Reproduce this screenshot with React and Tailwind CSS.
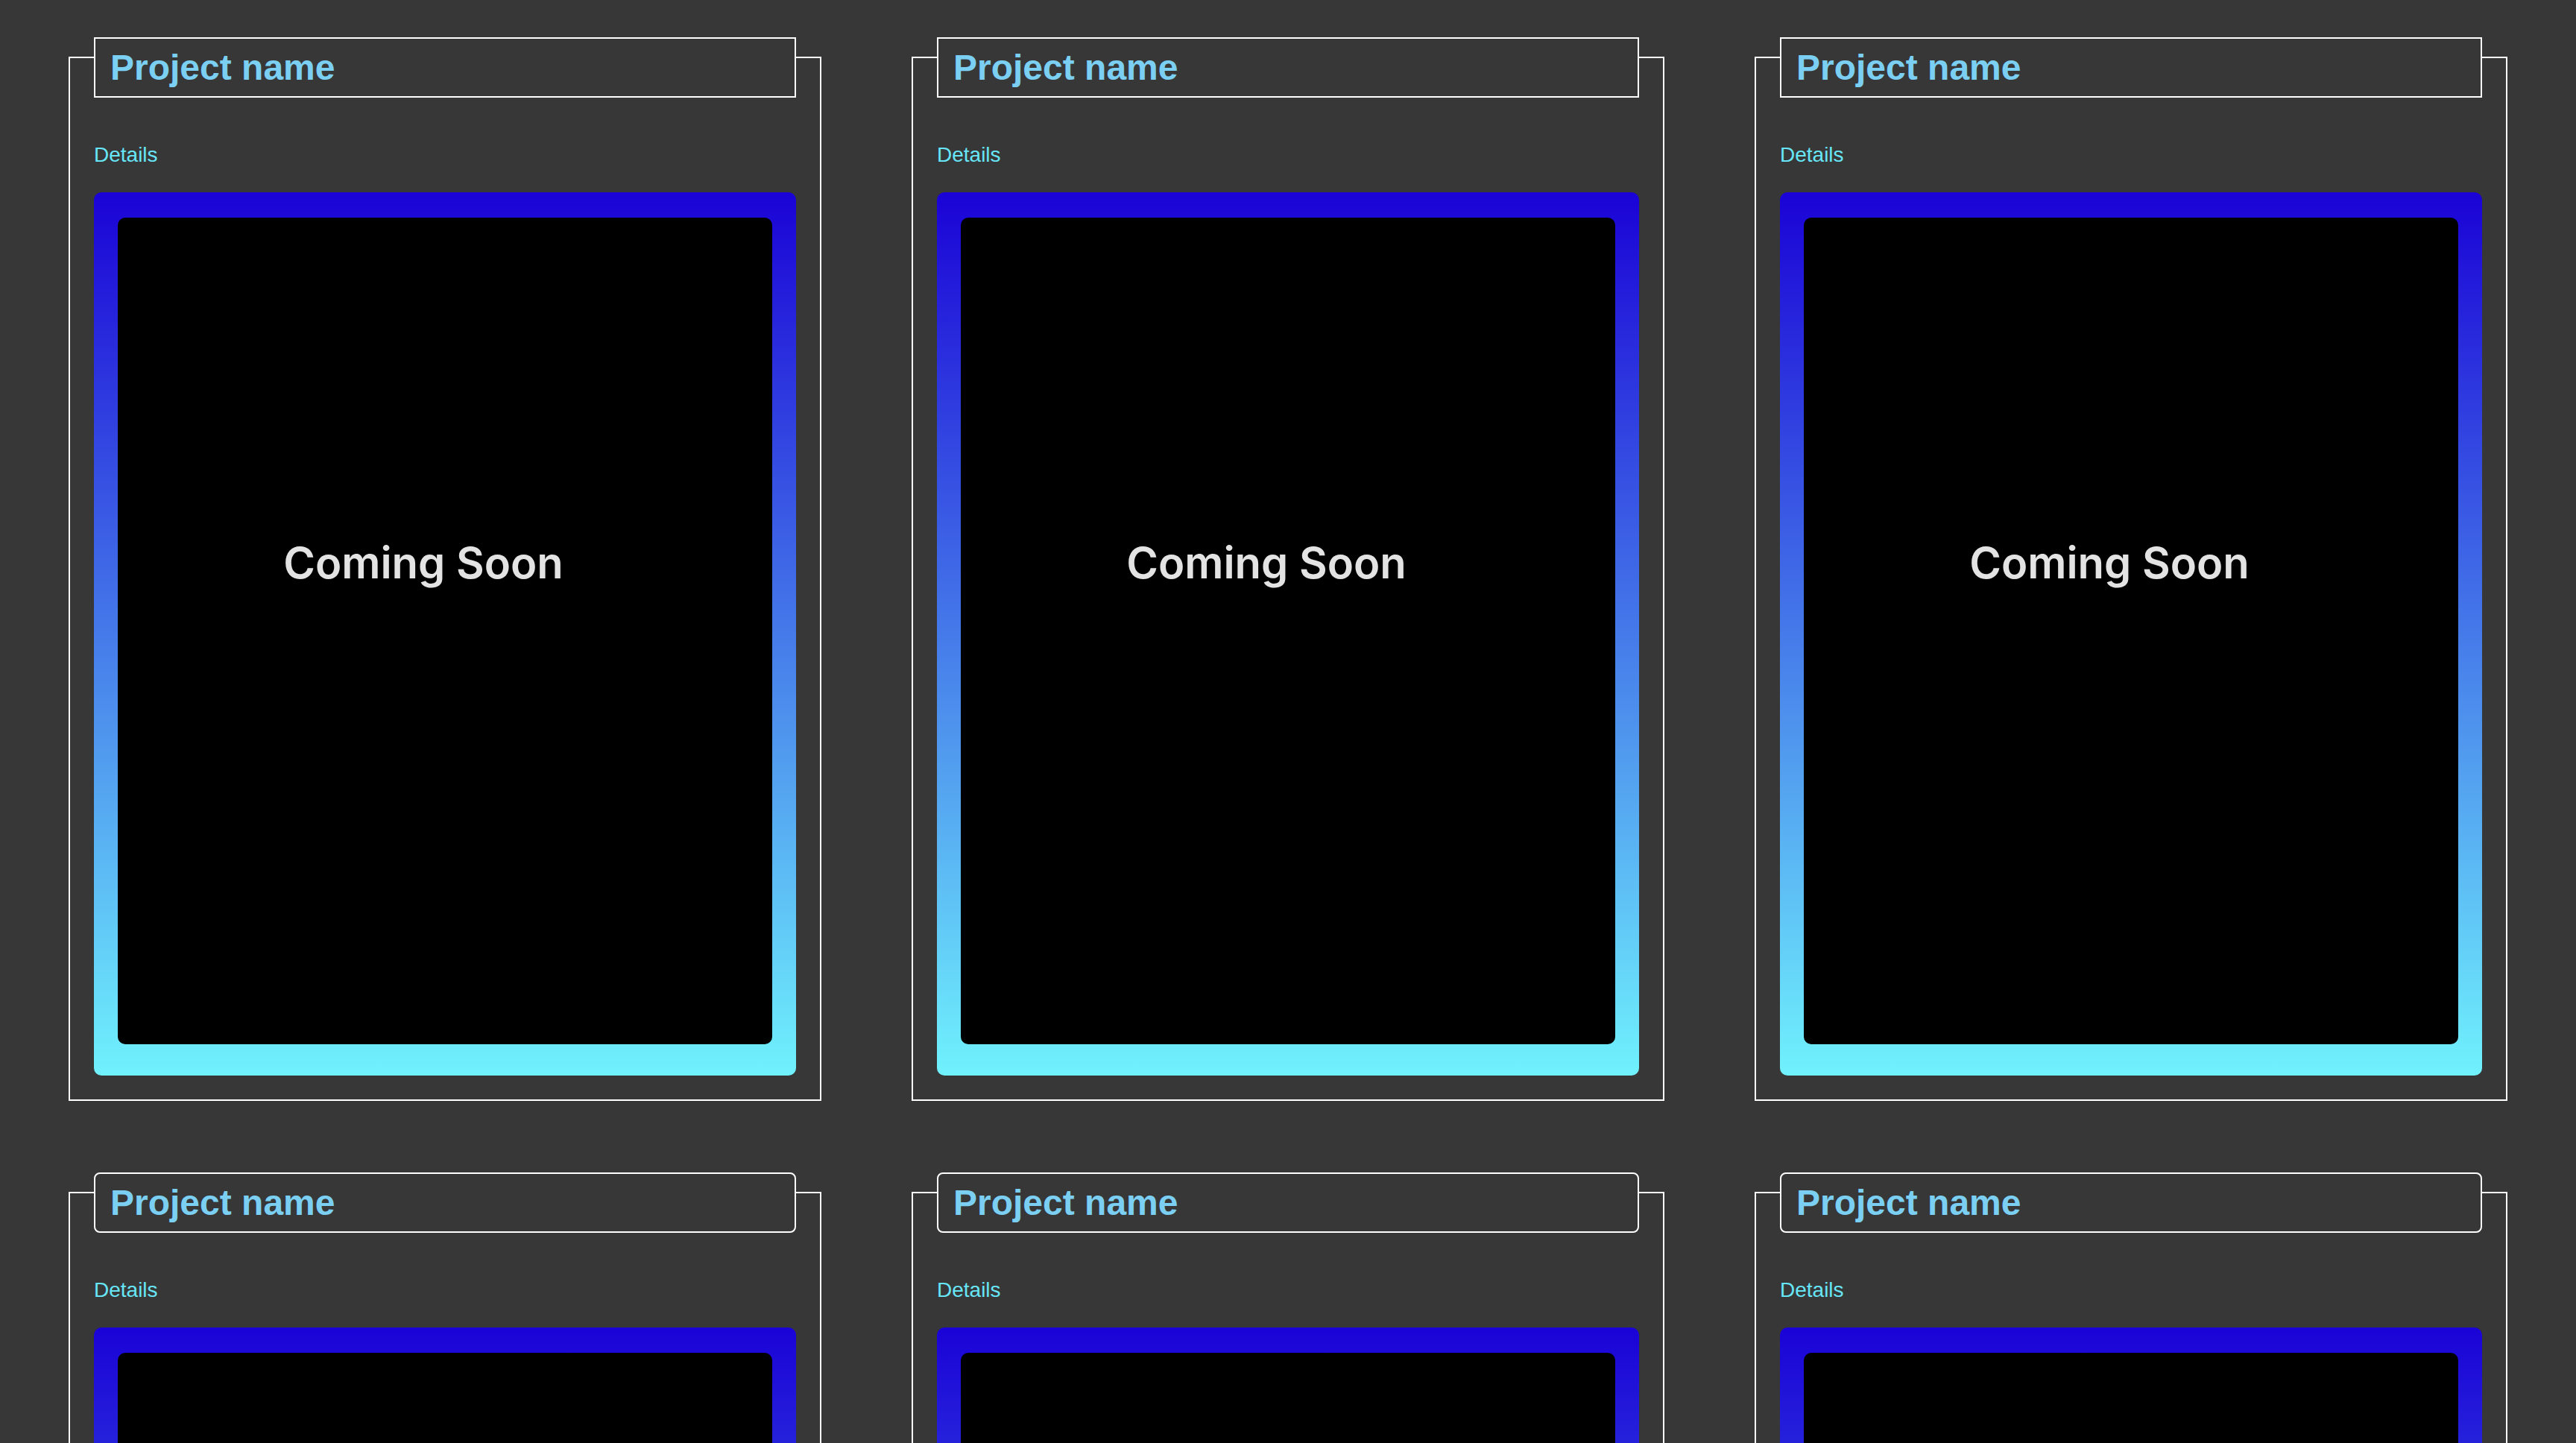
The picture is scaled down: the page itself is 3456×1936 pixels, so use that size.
const projects = [
  { name: 'Project name', details: 'Details', rounded: false },
  { name: 'Project name', details: 'Details', rounded: false },
  { name: 'Project name', details: 'Details', rounded: false },
  { name: 'Project name', details: 'Details', rounded: true },
  { name: 'Project name', details: 'Details', rounded: true },
  { name: 'Project name', details: 'Details', rounded: true },
]

const ProjectCard = ({ project }) => {
  return (
    <div className="mt-[26px] border-2 border-white px-[32px] pb-[32px]">
      {/* Title tab sitting over the top border */}
      <div
        className={
          project.rounded
            ? '-mt-[28px] flex h-[81px] items-center rounded-[8px] border-2 border-white bg-[#373737] pl-[20px]'
            : '-mt-[28px] flex h-[81px] items-center border-2 border-white bg-[#373737] pl-[20px]'
        }
      >
        <h2 className="font-['Liberation_Sans',Arial,sans-serif] text-[48px] font-bold leading-[64px] text-[#7bcff2]">
          {project.name}
        </h2>
      </div>

      <p className="mt-[57px] font-['Liberation_Sans',Arial,sans-serif] text-[28px] leading-[40px] text-[#67e6f8]">
        {project.details}
      </p>

      {/* Preview frame */}
      <div className="mt-[30px] rounded-[10px] bg-[linear-gradient(to_bottom,#1a02d6,#70f2fd)] px-[32px] pt-[34px] pb-[42px]">
        <div className="flex h-[1109px] justify-center rounded-[10px] bg-black pt-[428px] pr-[58px]">
          <span className="font-['Inter',sans-serif] text-[58px] font-semibold leading-[70px] text-[#e3e3e3]">
            Coming Soon
          </span>
        </div>
      </div>
    </div>
  )
}

const App = () => {
  return (
    <section className="min-h-screen bg-[#373737] px-[92px] pt-[50px] pb-[96px]">
      <div className="grid grid-cols-3 gap-x-[121px] gap-y-[96px]">
        {projects.map((project, idx) => (
          <ProjectCard key={idx} project={project} />
        ))}
      </div>
    </section>
  )
}

export default App
